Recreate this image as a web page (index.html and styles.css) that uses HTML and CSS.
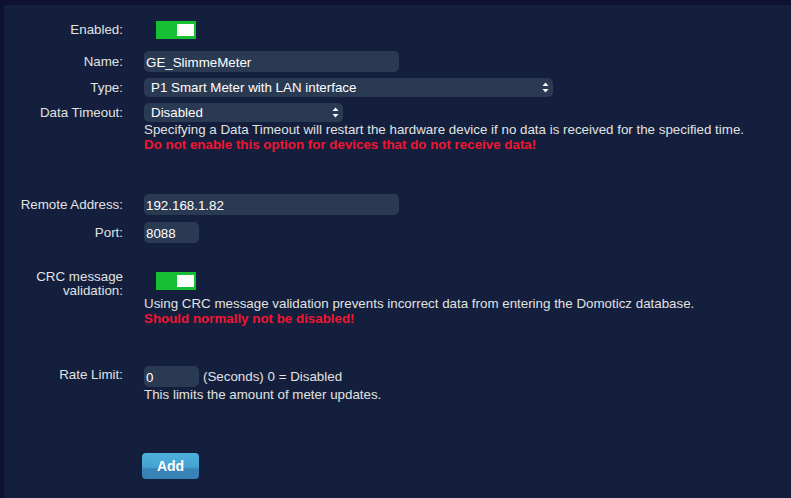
FILE: index.html
```html
<!DOCTYPE html>
<html lang="en">
<head>
    <meta charset="UTF-8">
    <title>Hardware</title>
    <link rel="stylesheet" href="styles.css">
</head>
<body>

<div class="painel">
    <div class="linha linha-enabled">
        <label class="rotulo">Enabled:</label>
        <div><span class="chave"><span class="chave-botao"></span></span></div>
    </div>

    <div class="linha linha-nome">
        <label class="rotulo alto">Name:</label>
        <div><input class="campo campo-largo" type="text" value="GE_SlimmeMeter"></div>
    </div>

    <div class="linha linha-tipo">
        <label class="rotulo medio">Type:</label>
        <div class="caixa-select caixa-tipo">
            <select class="selecao"><option>P1 Smart Meter with LAN interface</option></select>
            <svg class="setas" width="7" height="11" viewBox="0 0 7 11"><path d="M3.5 0.5 L6.5 4 L0.5 4 Z M3.5 10.5 L6.5 7 L0.5 7 Z" fill="#fff"/></svg>
        </div>
    </div>

    <div class="linha linha-timeout">
        <label class="rotulo medio">Data Timeout:</label>
        <div>
            <div class="caixa-select caixa-timeout">
                <select class="selecao"><option>Disabled</option></select>
                <svg class="setas" width="7" height="11" viewBox="0 0 7 11"><path d="M3.5 0.5 L6.5 4 L0.5 4 Z M3.5 10.5 L6.5 7 L0.5 7 Z" fill="#fff"/></svg>
            </div>
            <div class="ajuda">
                Specifying a Data Timeout will restart the hardware device if no data is received for the specified time.<br>
                <span class="aviso">Do not enable this option for devices that do not receive data!</span>
            </div>
        </div>
    </div>

    <div class="linha linha-endereco">
        <label class="rotulo alto">Remote Address:</label>
        <div><input class="campo campo-largo" type="text" value="192.168.1.82"></div>
    </div>

    <div class="linha linha-porta">
        <label class="rotulo alto">Port:</label>
        <div><input class="campo campo-curto" type="text" value="8088"></div>
    </div>

    <div class="linha linha-crc">
        <label class="rotulo duplo">CRC message<br>validation:</label>
        <div>
            <span class="chave"><span class="chave-botao"></span></span>
            <div class="ajuda ajuda-crc">
                Using CRC message validation prevents incorrect data from entering the Domoticz database.<br>
                <span class="aviso">Should normally not be disabled!</span>
            </div>
        </div>
    </div>

    <div class="linha linha-rate">
        <label class="rotulo">Rate Limit:</label>
        <div>
            <div class="rate-topo">
                <input class="campo campo-curto" type="text" value="0">
                <span>(Seconds) 0 = Disabled</span>
            </div>
            <div class="ajuda">This limits the amount of meter updates.</div>
        </div>
    </div>

    <div class="linha linha-add">
        <span></span>
        <div><button class="botao-add">Add</button></div>
    </div>
</div>

</body>
</html>
```

FILE: styles.css
```css
body {
    margin: 0;
    background-color: #0d1231;
    font-family: "Liberation Sans", Arial, sans-serif;
    font-size: 13.35px;
    color: #e2e2e2;
}
.painel {
    margin: 5px 0 0 4px;
    height: 493px;
    background-color: #131f3c;
    padding-top: 16px;
    box-sizing: border-box;
}
.linha {
    display: grid;
    grid-template-columns: 119px 1fr;
    column-gap: 21px;
    align-items: start;
}
.rotulo {
    text-align: right;
    line-height: 18px;
}
.rotulo.alto {
    line-height: 21px;
}
.rotulo.medio {
    line-height: 19px;
}
.rotulo.duplo {
    line-height: 14px;
    margin-top: -2px;
}
.linha-nome { margin-top: 12px; }
.linha-tipo { margin-top: 6px; }
.linha-timeout { margin-top: 6px; }
.linha-endereco { margin-top: 42px; }
.linha-porta { margin-top: 7px; }
.linha-crc { margin-top: 29px; }
.linha-rate { margin-top: 40px; }
.linha-add { margin-top: 51px; }

/* chave liga/desliga verde */
.chave {
    display: block;
    position: relative;
    width: 40px;
    height: 18px;
    margin-left: 12px;
    background-color: #17bf33;
}
.chave-botao {
    position: absolute;
    top: 3px;
    right: 2px;
    width: 17px;
    height: 12px;
    background-color: #fff;
}

.campo {
    display: block;
    height: 21px;
    box-sizing: border-box;
    border: none;
    border-radius: 5px;
    background-color: #2b3a53;
    color: #fff;
    font-family: "Liberation Sans", Arial, sans-serif;
    font-size: 13.35px;
    padding: 1px 2px 0;
    outline: none;
}
.campo-largo { width: 255px; }
.campo-curto { width: 55px; }

.caixa-select {
    position: relative;
}
.caixa-tipo { width: 409px; }
.caixa-timeout { width: 199px; }
.selecao {
    display: block;
    width: 100%;
    height: 19px;
    border: none;
    border-radius: 5px;
    background-color: #2b3a53;
    color: #fff;
    font-family: "Liberation Sans", Arial, sans-serif;
    font-size: 13.35px;
    padding: 0 0 0 7px;
    -webkit-appearance: none;
    appearance: none;
    outline: none;
}
.setas {
    position: absolute;
    right: 4px;
    top: 4px;
}

.ajuda {
    line-height: 15px;
}
.ajuda-crc {
    margin-top: 6px;
}
.aviso {
    color: #ee1632;
    font-weight: bold;
}

.rate-topo {
    display: flex;
    align-items: center;
    gap: 4px;
    line-height: 20px;
}

.botao-add {
    margin-left: -2px;
    width: 57px;
    height: 26px;
    border: none;
    border-radius: 4px;
    background: linear-gradient(to bottom, #4db2dc 0%, #45a2d0 55%, #3883b8 62%, #3781b6 100%);
    color: #fff;
    font-family: "Liberation Sans", Arial, sans-serif;
    font-weight: bold;
    font-size: 14px;
    cursor: pointer;
}
```
